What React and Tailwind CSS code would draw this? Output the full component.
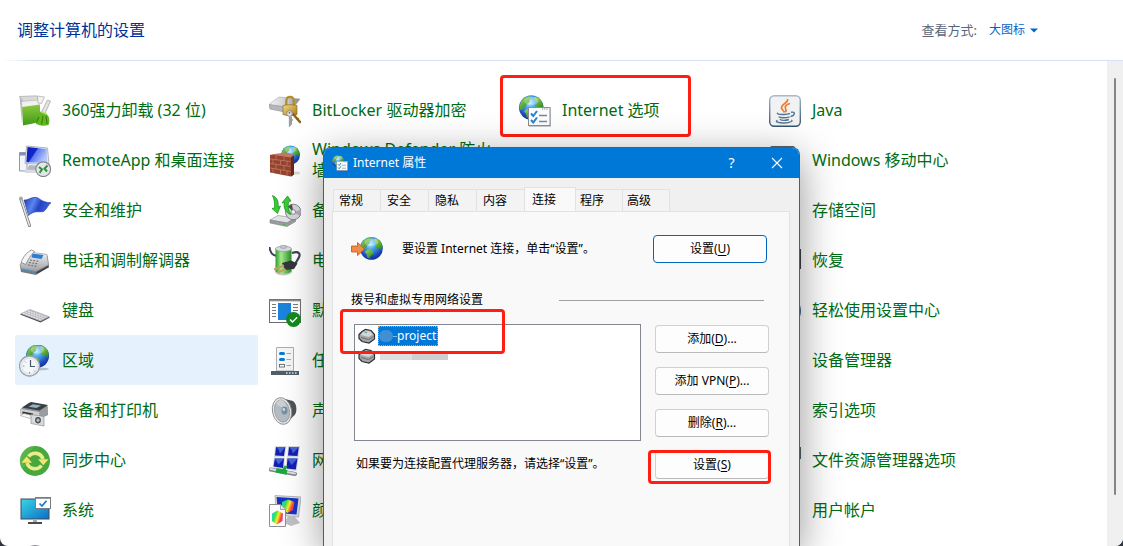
import React from "react";

function Svg({ children, className = "h-8 w-8" }) {
  return (
    <svg viewBox="0 0 32 32" className={`shrink-0 ${className}`} aria-hidden="true">
      {children}
    </svg>
  );
}

/* Gradients shared by all the icons. */
function Defs() {
  return (
    <svg className="absolute h-0 w-0" aria-hidden="true">
      <defs>
        <radialGradient id="sea" cx="0.45" cy="0.3" r="0.75">
          <stop offset="0" stopColor="#b5ecff" />
          <stop offset="0.35" stopColor="#3f9fe8" />
          <stop offset="0.75" stopColor="#1c45b8" />
          <stop offset="1" stopColor="#122a80" />
        </radialGradient>
        <linearGradient id="land" x1="0" y1="0" x2="0.6" y2="1">
          <stop offset="0" stopColor="#a6dc5a" />
          <stop offset="1" stopColor="#2c8a2a" />
        </linearGradient>
        <linearGradient id="screen" x1="0" y1="0" x2="1" y2="0.5">
          <stop offset="0" stopColor="#0a1fb4" />
          <stop offset="0.45" stopColor="#1426cc" />
          <stop offset="0.5" stopColor="#5a7af0" />
          <stop offset="1" stopColor="#b7c8fb" />
        </linearGradient>
        <linearGradient id="metal" x1="0" y1="0" x2="0" y2="1">
          <stop offset="0" stopColor="#f6f6f7" />
          <stop offset="1" stopColor="#9c9ea1" />
        </linearGradient>
        <linearGradient id="metalAcross" x1="0" y1="0" x2="1" y2="0">
          <stop offset="0" stopColor="#f4f4f5" />
          <stop offset="0.6" stopColor="#c9cacd" />
          <stop offset="1" stopColor="#7f8184" />
        </linearGradient>
        <linearGradient id="leaf" x1="0" y1="0" x2="0" y2="1">
          <stop offset="0" stopColor="#9ed24a" />
          <stop offset="1" stopColor="#3d9a16" />
        </linearGradient>
        <linearGradient id="gold" x1="0" y1="0" x2="1" y2="1">
          <stop offset="0" stopColor="#f3db83" />
          <stop offset="1" stopColor="#a67a1b" />
        </linearGradient>
        <linearGradient id="flagBlue" x1="0" y1="0" x2="1" y2="0.3">
          <stop offset="0" stopColor="#1d3bb4" />
          <stop offset="0.4" stopColor="#5b84f0" />
          <stop offset="0.65" stopColor="#2343c4" />
          <stop offset="1" stopColor="#3f62dd" />
        </linearGradient>
        <linearGradient id="aqua" x1="0" y1="0" x2="1" y2="1">
          <stop offset="0" stopColor="#38d6e8" />
          <stop offset="1" stopColor="#0f6cc4" />
        </linearGradient>
        <linearGradient id="battery" x1="0" y1="0" x2="1" y2="0">
          <stop offset="0" stopColor="#2f9a2c" />
          <stop offset="0.35" stopColor="#a5ea90" />
          <stop offset="1" stopColor="#2a8c28" />
        </linearGradient>
        <linearGradient id="javaEdge" x1="0" y1="0" x2="0" y2="1">
          <stop offset="0" stopColor="#a9b9c8" />
          <stop offset="1" stopColor="#35546f" />
        </linearGradient>
        <linearGradient id="rainbow" x1="0" y1="0.2" x2="1" y2="0.6">
          <stop offset="0" stopColor="#12d6e8" />
          <stop offset="0.3" stopColor="#3be04a" />
          <stop offset="0.55" stopColor="#f8ee2e" />
          <stop offset="0.8" stopColor="#fb4a2c" />
          <stop offset="1" stopColor="#e32bd0" />
        </linearGradient>
      </defs>
    </svg>
  );
}

/* A globe of radius 12 round (12, 12), moved and scaled by its caller. */
function Globe({ x = 0, y = 0, scale = 1 }) {
  return (
    <g transform={`translate(${x} ${y}) scale(${scale})`}>
      <circle cx="12" cy="12" r="12" fill="url(#sea)" />
      <path d="M1.5 8C3 4 6 1.5 9.500 0.800L12 2.200 10 4.500 10.500 6.500 7.500 8.500 6.500 11.500 4 12 3 15 1 14C0.300 12 0.500 10 1.500 8Z" fill="url(#land)" />
      <path d="M15 1.500 18.500 2.200C21.500 4 23.300 7 23.800 10.500L22.500 14 20.500 11.500 18 12.500 16 9.500 17.500 7 15.500 5Z" fill="url(#land)" />
      <path d="M7 14 11 13 14.500 15.500 13.500 18.500 11 20 10.500 22.800 7.500 21.500 7 18 5 16Z" fill="url(#land)" />
      <ellipse cx="12" cy="5.500" rx="7" ry="4" fill="#ffffff" opacity="0.3" />
    </g>
  );
}

function UninstallIcon() {
  return (
    <Svg>
      <path d="M0.500 1.500 4 6.500 20 5 17.500 0.800Z" fill="#d8d9da" stroke="#aaabac" strokeWidth="0.700" />
      <path d="M0.500 1.500 3 28.500 4.500 6.500Z" fill="#b9babb" />
      <path d="M3 6.800 21 5.200V27L4 30.500Z" fill="url(#leaf)" />
      <path d="M3 6.800 21 5.200V9.500L3.200 12Z" fill="#f0f1f0" />
      <path d="M18.500 1 25.500 2 22.500 8.500 19 8Z" fill="#f1f1f1" stroke="#a9aaab" strokeWidth="0.700" />
      <path d="M28.500 5 31.500 6.200 26 18.500 22.500 17Z" fill="#e3e4e5" stroke="#9b9c9d" strokeWidth="0.700" />
      <path d="M21.500 16.500 27.500 19C31 22 31 27 29.500 30 24 31.800 19 30.500 15.500 27.500 19 25 19 20 21.500 16.500Z" fill="#63b81f" />
      <path d="M20 22 17.500 27.500M24 21 22.500 29.500M27 21 28 29" stroke="#34800f" strokeWidth="1.100" fill="none" />
      <path d="M22 16.500 27.500 19" stroke="#bce36f" strokeWidth="1.500" />
    </Svg>
  );
}

function RemoteAppIcon() {
  return (
    <Svg>
      <path d="M0.500 7.500H8V26H0.500Z" fill="#f4f5f8" stroke="#8f99ad" />
      <path d="M1 8H8V10.500H1Z" fill="#7e90b8" />
      <path d="M7.500 1 28.500 3 30 19.500 6 18.500Z" fill="#e7e9ef" stroke="#a0a5b0" strokeWidth="0.800" />
      <path d="M8.500 2 27.500 4 28.300 18 7.300 17.200Z" fill="url(#screen)" />
      <path d="M10 20 18 20.500 17 25H8Z" fill="#b4b8c2" />
      <path d="M6 24.500 18 25 16 28H6Z" fill="#d9dbe1" />
      <circle cx="24.200" cy="24.200" r="7.400" fill="#e4e5e7" stroke="#85878b" strokeWidth="1.200" />
      <path d="M20 22 23 24.500 20.500 27.800M28.500 20.500 25.500 23.500 28 26.500" fill="none" stroke="#28953a" strokeWidth="2" />
    </Svg>
  );
}

function FlagIcon() {
  return (
    <Svg>
      <path d="M5 5C9 5.500 11 2.500 16 2.300 20 2 22 7.500 32 7.800 28.500 10 28 14.500 24.500 16.500 19 17.500 16 15 9.500 20.500Z" fill="url(#flagBlue)" stroke="#1b328e" strokeWidth="0.600" />
      <path d="M1.800 4 10.500 30.500" stroke="#747679" strokeWidth="3" strokeLinecap="round" />
      <path d="M1.800 4 10.500 30.500" stroke="#e6e7e9" strokeWidth="1.500" strokeLinecap="round" />
      <circle cx="2" cy="3.500" r="1.900" fill="#a6a8ab" />
    </Svg>
  );
}

function PhoneIcon() {
  return (
    <Svg>
      <path d="M1 21 13 8 28.500 11 30 22 17 30 2 27Z" fill="#77797b" />
      <path d="M1 19.500 11 7 28 9.500 29.500 20 17 26.500 2 23.500Z" fill="url(#metal)" stroke="#85878a" strokeWidth="0.600" />
      <path d="M13.500 8.500 24.500 10 22.500 14 12.500 12.500Z" fill="#2c7fd0" />
      <path d="M2 17.500C4 12 8 7 12.500 5L15.500 6.500C12 10 9 14 7 19.500Z" fill="#f4f4f5" stroke="#8b8d90" strokeWidth="0.900" />
      <path d="M11 15 20.500 16.500M10 17.500 19.500 19M9 20 18.500 21.500" stroke="#6c6e72" strokeWidth="1.100" strokeDasharray="2 1.200" />
      <path d="M3.500 24.700 16 27.200" stroke="#369be4" strokeWidth="1.800" strokeDasharray="2 1.200" />
      <path d="M17.500 28 29.500 21.500" stroke="#3f4143" strokeWidth="1.500" />
    </Svg>
  );
}

function KeyboardIcon() {
  return (
    <Svg>
      <path d="M1 19.500 11 15 31 22.500 21.500 27.500Z" fill="#4b4d52" />
      <path d="M1 18.500 11 14 31 21.500 21.500 26.200Z" fill="#b9bbc0" />
      <path d="M4 18.200 22.500 25M6.500 17 25 23.700M9 15.900 27.500 22.500" stroke="#f0f0f2" strokeWidth="1" strokeDasharray="2 0.800" />
    </Svg>
  );
}

function RegionIcon() {
  return (
    <Svg>
      <Globe x={7} y={-0.5} scale={0.96} />
      <ellipse cx="21" cy="24" rx="9" ry="1.500" fill="#7d8da0" opacity="0.5" />
      <circle cx="10.500" cy="21" r="10" fill="#eef1f4" stroke="#9aa3ad" strokeWidth="1.300" />
      <circle cx="10.500" cy="21" r="7.800" fill="#f4f7f9" stroke="#ccd3da" strokeWidth="0.600" />
      <path d="M11.500 15V21.500H16" stroke="#43566a" strokeWidth="1.200" fill="none" />
      <path d="M4 21H5.500M10.500 27V28.500M6 16.500 7 17.500M15 25.500 16 26.500" stroke="#8494a3" strokeWidth="1" />
    </Svg>
  );
}

function PrinterIcon() {
  return (
    <Svg>
      <path d="M1.500 14 10 7.500 28.500 10.500 29 20 20 24 1.500 19Z" fill="#8d9093" />
      <path d="M3 12.500 12 7 29 10 20.500 15.500Z" fill="#3a3d42" />
      <path d="M9.500 11.800 14 9.300 22 10.500 17.500 13Z" fill="#93b3c4" />
      <path d="M2 14 20.500 17V24L2 19.500Z" fill="#cfd0d2" />
      <path d="M20.500 16.500 28.500 11.500V19.500L20.500 24Z" fill="#9b9da0" />
      <path d="M3.500 16.500 14 18.500V21.500L3.500 19.500Z" fill="#2b2d30" />
      <path d="M1 20.500 5 18.500 13.500 20.500 11 23.500Z" fill="#f6f6f7" stroke="#9ea0a2" strokeWidth="0.600" />
      <path d="M12 19.500 25 21.500V31L12 28.500Z" fill="#d8d9db" stroke="#8e9093" strokeWidth="0.700" />
      <ellipse cx="19" cy="25.200" rx="3.600" ry="4" fill="#505359" stroke="#f2f2f3" strokeWidth="1" />
      <ellipse cx="19" cy="25.200" rx="1.500" ry="1.800" fill="#a9bfca" />
    </Svg>
  );
}

function SyncIcon() {
  return (
    <Svg>
      <circle cx="16" cy="16" r="15" fill="#47a83e" />
      <path d="M6.500 21A11 11 0 0 1 7 11L16 1A15 15 0 0 0 3 24Z" fill="#6cc158" opacity="0.5" />
      <path d="M9.500 11.500A8.300 8.300 0 0 1 24 14" fill="none" stroke="#ecea8c" strokeWidth="3.600" />
      <path d="M19 14.200H29.500L24.300 20.200Z" fill="#f8e36c" />
      <path d="M22.500 20.500A8.300 8.300 0 0 1 8 18" fill="none" stroke="#ecea8c" strokeWidth="3.600" />
      <path d="M2.500 17.800H13L7.700 11.200Z" fill="#f8e36c" />
    </Svg>
  );
}

function SystemIcon() {
  return (
    <Svg>
      <rect x="2" y="4" width="28" height="20" fill="url(#aqua)" stroke="#3c4d5a" />
      <path d="M14 24H18V27H14Z" fill="#a6abb0" />
      <path d="M9 27H23V29H9Z" fill="#474c52" />
      <rect x="16.500" y="2.500" width="15" height="11" fill="#ffffff" stroke="#777d84" />
      <path d="M16.500 3H31.500" stroke="#777d84" strokeWidth="1.500" />
      <path d="M20.500 8.500 23 11 27.500 5.800" fill="none" stroke="#1978d2" strokeWidth="1.700" />
    </Svg>
  );
}

function DialIcon() {
  return (
    <Svg>
      <circle cx="16" cy="16" r="15.500" fill="#d0d0d0" stroke="#85878a" />
    </Svg>
  );
}

function BitLockerIcon() {
  return (
    <Svg>
      <path d="M0.500 9 10 2 31 4 25 12 1 13Z" fill="url(#metalAcross)" stroke="#a4a5a8" strokeWidth="0.600" />
      <path d="M0.500 9.500 16 12 16 17 1 14Z" fill="#b7b8bb" stroke="#8b8c90" strokeWidth="0.600" />
      <path d="M17.300 10.500V6C17.500 0.500 24.500 0.500 24.800 6V10.500" fill="none" stroke="#b58d2e" strokeWidth="2.300" />
      <path d="M14 10.500C18 9.500 24 9.500 28 10.500V19.500C24 21 18 21 14 19.500Z" fill="url(#gold)" stroke="#8f6c1d" strokeWidth="0.700" />
      <path d="M24 19 31 27" stroke="#8c6315" strokeWidth="2.500" strokeLinecap="round" />
      <path d="M28 25 29.500 23" stroke="#8c6315" strokeWidth="1.500" />
      <circle cx="20.500" cy="18.500" r="2.800" fill="#e8e8e9" stroke="#85878a" strokeWidth="1" />
      <path d="M20.700 21.500V30.500L22.200 29V21.500M22.500 25H24" stroke="#9b9da0" strokeWidth="1.700" fill="none" />
      <circle cx="20.500" cy="17.800" r="0.900" fill="#5b5d60" />
    </Svg>
  );
}

function FirewallIcon() {
  return (
    <Svg>
      <Globe x={12} y={0.5} scale={0.79} />
      <ellipse cx="27" cy="28" rx="4" ry="1.500" fill="#9a9a9a" opacity="0.4" />
      <path d="M1 10 19 8.500 25 10.500V29.500L22 31.500 1 27.500Z" fill="#97432f" />
      <path d="M1 9.500 17 7.500 25 10 21.500 12.500Z" fill="#c27a63" />
      <path d="M1.200 14 21.800 16.500M1.200 18.500 21.800 21.500M1.200 23 21.800 26.500M7 10.500V14.500M15 11.500V15.500M4 14.500V18.800M11.500 15.500V19.800M18 16V20.500M7 19.500V24M15 20.500V25.300M4 23.500V28M11.500 25V29.500M18 26V31" stroke="#c88e7b" strokeWidth="0.600" />
      <path d="M22 12.500 25 10.500V29.500L22 31.500Z" fill="#6c2819" />
    </Svg>
  );
}

function BackupIcon() {
  return (
    <Svg>
      <path d="M1 25 9 20.500 26.500 23 18 28Z" fill="#e3e4e5" stroke="#8f9194" strokeWidth="0.600" />
      <path d="M1 25 18 28 26.500 23V26.500L18 31.500 1 28Z" fill="#9c9ea1" stroke="#6f7174" strokeWidth="0.500" />
      <circle cx="24.300" cy="17" r="7.800" fill="#d5d6d9" stroke="#6f7174" strokeWidth="0.800" />
      <path d="M24.300 17 19 11.500 23 9.300Z" fill="#4d4f53" />
      <path d="M24.300 17 31.500 15 31 21Z" fill="#b9a2c4" />
      <circle cx="24.300" cy="17" r="2.300" fill="#f7f7f8" stroke="#77797c" strokeWidth="0.800" />
      <path d="M3.500 0.500C8 2 10 7 9 12L11.500 11 8.500 18.500 3 13.500 5.500 13C6 8 5 4 3.500 0.500Z" fill="#33cf2f" stroke="#178a18" strokeWidth="0.700" />
      <path d="M13 8 18.500 1 22 6 19.800 6.500C18.500 11 19.500 16 22 19.500 16.500 18 14 12 15.500 7.500Z" fill="#33cf2f" stroke="#178a18" strokeWidth="0.700" />
      <path d="M14 29.500 16 30" stroke="#2bd02c" strokeWidth="1.500" />
    </Svg>
  );
}

function PowerIcon() {
  return (
    <Svg>
      <path d="M0.500 2C1 8 4 10.500 8 11" fill="none" stroke="#3b4257" strokeWidth="2" />
      <path d="M6.500 3.500H22.500V27C20 31 9 31 6.500 27Z" fill="url(#battery)" />
      <ellipse cx="14.500" cy="3.800" rx="8" ry="2.600" fill="#d9dde0" stroke="#8f969b" strokeWidth="0.700" />
      <ellipse cx="14.500" cy="1.800" rx="3.500" ry="1.700" fill="#c3c7cb" stroke="#888e93" strokeWidth="0.500" />
      <path d="M23 8C30 5.500 32.500 9 29 14L26 19" fill="none" stroke="#3b4257" strokeWidth="2.200" />
      <path d="M13 18 22 15.500 28.500 18.500 25 24 16 25Z" fill="#34363b" />
      <path d="M15 20.500 5 24.500M16.500 24 8 28" stroke="#c3a05f" strokeWidth="2.200" />
      <path d="M6.500 27.500C10 30.500 19 30.500 22.500 27" fill="none" stroke="#c7cbce" strokeWidth="1.500" />
    </Svg>
  );
}

function DefaultAppsIcon() {
  return (
    <Svg>
      <rect x="0.500" y="4.500" width="31" height="23" fill="#ffffff" stroke="#6c6e71" />
      <path d="M0.500 5.500H31.500" stroke="#8a8c90" strokeWidth="1.600" />
      <path d="M3 9.500H7M3 12.500H7M3 15.500H7M3 18.500H7M3 21.500H7M24 9.500H29M24 12.500H29M24 15.500H29" stroke="#77797c" />
      <path d="M9 8H22V25H9Z" fill="#1b84dc" />
      <circle cx="24.500" cy="24.500" r="7.500" fill="#128a1d" />
      <path d="M21 24.500 23.500 27 28.200 22.200" fill="none" stroke="#ffffff" strokeWidth="1.400" />
    </Svg>
  );
}

function TaskbarIcon() {
  return (
    <Svg>
      <path d="M7.500 2.500H24.500V26H7.500Z" fill="#f5f6f7" stroke="#aaacaf" />
      <rect x="10" y="7" width="6" height="3" rx="1.500" fill="#0b78cf" />
      <rect x="10" y="13" width="6" height="3" rx="1.500" fill="#0b78cf" />
      <rect x="10.500" y="19.500" width="5" height="2.500" fill="#ffffff" stroke="#66686b" strokeWidth="0.900" />
      <path d="M17.500 8.500H22M17.500 14.500H22M17.500 20.500H22" stroke="#a6a8ab" />
      <path d="M2 26H30V30H2Z" fill="#505e69" />
      <path d="M17 28H27.500" stroke="#e3e8eb" strokeWidth="1.500" strokeDasharray="1.500 1.500" />
    </Svg>
  );
}

function SoundIcon() {
  return (
    <Svg>
      <path d="M14 3.500 24 6C28.500 9 28.500 19 24.500 21L17 29Z" fill="#505357" />
      <ellipse cx="13" cy="16" rx="9.500" ry="13.500" transform="rotate(-12 13 16)" fill="#ededee" stroke="#8b8d90" strokeWidth="0.900" />
      <ellipse cx="13" cy="16" rx="7.500" ry="11.300" transform="rotate(-12 13 16)" fill="#b3bcc3" stroke="#85898d" strokeWidth="0.600" />
      <path d="M7 9C11 12 15 13 18 12L15 6C12 3.500 9 5 7 9Z" fill="#d0d6da" opacity="0.8" />
      <ellipse cx="15.500" cy="15.500" rx="3" ry="4" fill="#7590a2" />
      <ellipse cx="14.800" cy="14.500" rx="1.300" ry="1.800" fill="#c9dbe5" />
    </Svg>
  );
}

function NetworkIcon() {
  return (
    <Svg>
      <path d="M6 1H17.500L16 12H5ZM19 1H31L29.500 12H18ZM5 12.500H16L15 24.500 3.500 22.500ZM17.500 12.500H29.500L27.500 26 16.500 24.500Z" fill="#d7dae1" />
      <path d="M7 2H16.300L15 11 6 10.500ZM20 2H29.800L28.500 11 19 10.500ZM5.800 13.500H15L14 23 4.500 21.500ZM18.500 13.500H28.500L26.800 24.500 17.500 23.500Z" fill="#1220b2" />
      <path d="M7 2H16.300L11 8.500 9.500 4.500ZM20 2H29.800L24 8.500 22.500 4.500ZM5.800 13.500H15L9.500 19.500ZM18.500 13.500H28.500L22.500 20Z" fill="#5a78e4" opacity="0.75" />
      <path d="M1.500 24.500 26 29" stroke="#7f8487" strokeWidth="4" strokeLinecap="round" />
      <path d="M1.500 24 26 28.500" stroke="#dadddf" strokeWidth="2" strokeLinecap="round" />
      <path d="M7 25.300 18 27.500" stroke="#20a840" strokeWidth="4.500" />
      <path d="M14 26.500 17 21" stroke="#20a840" strokeWidth="3" />
    </Svg>
  );
}

function ColorIcon() {
  return (
    <Svg>
      <path d="M6 0.500 32 2 29.500 22 7.500 20Z" fill="#dcdde1" stroke="#9a9ca1" strokeWidth="0.700" />
      <path d="M7.500 2 29.500 3.500 27.500 19.500 9 18Z" fill="#1634c4" />
      <path d="M19 21 26 22 31 28 22 31 15 28Z" fill="#bfc1c5" />
      <path d="M13 7 19 4.500 25.500 7 24 15 18.500 18 13 14.500Z" fill="url(#rainbow)" />
      <path d="M0.500 9.500H11.500L16.500 14.500V31.500H0.500Z" fill="#fbfbfb" stroke="#8e9093" />
      <path d="M11.500 9.500V14.500H16.500" fill="#e3e4e6" stroke="#8e9093" strokeWidth="0.800" />
      <path d="M3 18.500 8.500 15.500 14 18.500 13.500 26 8 29.500 3 26Z" fill="url(#rainbow)" />
    </Svg>
  );
}

function InternetIcon({ className }) {
  return (
    <Svg className={className}>
      <Globe x={0} y={0.3} scale={1.02} />
      <path d="M10 13H32V32H10Z" fill="#7c7e82" opacity="0.4" />
      <rect x="9.500" y="12.500" width="21.500" height="18" fill="#fbfcfd" stroke="#8b8d91" />
      <path d="M23 14H29.500" stroke="#77797d" strokeWidth="1" strokeDasharray="1.200 1" />
      <path d="M12 18.500 14.300 21 18 16M12 25 14.300 27.500 18 22.500" fill="none" stroke="#2384cf" strokeWidth="2" />
      <path d="M20 20.500H28M20 26.500H28" stroke="#82868c" strokeWidth="1.300" />
    </Svg>
  );
}

function JavaIcon() {
  return (
    <Svg>
      <rect x="0.700" y="0.700" width="30.600" height="30.600" rx="4.500" fill="#f1f2f3" stroke="url(#javaEdge)" strokeWidth="1.400" />
      <path d="M18.500 4C20 7.500 12 9 12.500 13 12.800 15 15 15.500 15.300 17.500M21 8.500C17 9.500 15.500 11.500 16.500 13.300 17.300 14.800 17.500 15.800 16.300 17.300" fill="none" stroke="#ee7a2b" strokeWidth="1.700" />
      <path d="M9 18C7 18.800 10 19.800 15 19.500 18 19.300 20 18.800 21 18.300M22 17.300C27 16 26 21 21.500 21.500M10 21.500C10 23 17 23.200 20.500 21.800M11 24.300C11.500 25.600 17 25.700 19.800 24.500M8.500 25.500C3.500 27.300 17 29.300 22.500 26.500 23.300 26 23 25.500 22.300 25.200" fill="none" stroke="#557590" strokeWidth="1.400" />
    </Svg>
  );
}

function DeviceIcon() {
  return (
    <Svg>
      <rect x="1" y="1" width="25" height="22" rx="2" fill="#5a6168" />
      <rect x="3" y="3" width="21" height="18" fill="#2d81c9" />
      <rect x="8" y="25" width="12" height="2" fill="#5a6168" />
    </Svg>
  );
}

function DriveIcon() {
  return (
    <Svg>
      <rect x="1" y="9" width="30" height="14" rx="2" fill="url(#metal)" />
    </Svg>
  );
}

function RecoveryIcon() {
  return (
    <Svg>
      <rect x="1" y="4" width="31" height="20" fill="#3b4146" />
      <rect x="3" y="6" width="26" height="16" fill="#2d81c9" />
    </Svg>
  );
}

function FolderOptionsIcon() {
  return (
    <Svg>
      <path d="M1 6H12L14 9H28V29H1Z" fill="#f5c84f" />
      <rect x="14" y="2" width="18" height="12" fill="#56616b" />
      <rect x="15" y="4" width="15" height="9" fill="#ffffff" />
    </Svg>
  );
}

function AccessIcon() {
  return (
    <Svg>
      <circle cx="16" cy="16" r="16" fill="#3d668f" />
      <path d="M8 16H24M16 8V24" stroke="#ffffff" strokeWidth="3" />
    </Svg>
  );
}

function DialUpIcon({ className }) {
  return (
    <Svg className={className}>
      <Globe x={9} y={4} scale={0.95} />
      <path d="M0.500 13H6.500V9.500L13.500 16 6.500 22.500V19H0.500Z" fill="#f28a48" stroke="#c2541a" strokeWidth="0.800" />
    </Svg>
  );
}

function ModemIcon() {
  return (
    <svg viewBox="0 0 18 16" className="h-4 w-[18px] shrink-0" aria-hidden="true">
      <path d="M1 6.500 4 3.500 7.500 1.500 13 2.500 16.500 6.500V11L11 15 4 13.500 1 10.500Z" fill="#a3a5a6" stroke="#2f3132" strokeWidth="1.200" />
      <path d="M4.500 4.500 7.500 2.500 12.500 3.500 15 6.500 10.500 9 3 7Z" fill="#d3d5d6" />
      <path d="M3 9.500 10.500 11.500 15.500 8.500" stroke="#6c6e70" strokeWidth="1" fill="none" />
      <path d="M6.500 4 9 4.500" stroke="#2fa39c" strokeWidth="1.200" />
    </svg>
  );
}

const columns = [
  [
    ["360强力卸载 (32 位)", UninstallIcon],
    ["RemoteApp 和桌面连接", RemoteAppIcon],
    ["安全和维护", FlagIcon],
    ["电话和调制解调器", PhoneIcon],
    ["键盘", KeyboardIcon],
    ["区域", RegionIcon, true],
    ["设备和打印机", PrinterIcon],
    ["同步中心", SyncIcon],
    ["系统", SystemIcon],
    ["", DialIcon],
  ],
  [
    ["BitLocker 驱动器加密", BitLockerIcon],
    ["Windows Defender 防火墙", FirewallIcon],
    ["备份和还原", BackupIcon],
    ["电源选项", PowerIcon],
    ["默认程序", DefaultAppsIcon],
    ["任务栏和导航", TaskbarIcon],
    ["声音", SoundIcon],
    ["网络和共享中心", NetworkIcon],
    ["颜色管理", ColorIcon],
  ],
  [["Internet 选项", InternetIcon, false, true]],
  [
    ["Java", JavaIcon],
    ["Windows 移动中心", DeviceIcon],
    ["存储空间", DriveIcon],
    ["恢复", RecoveryIcon],
    ["轻松使用设置中心", AccessIcon],
    ["设备管理器", DriveIcon],
    ["索引选项", DriveIcon],
    ["文件资源管理器选项", FolderOptionsIcon],
    ["用户帐户", DriveIcon],
  ],
];

function Highlight({ className }) {
  return <span className={`pointer-events-none absolute rounded-[4px] border-3 border-[#ff1f12] ${className}`} />;
}

function PanelItem({ label, icon: Icon, active, marked }) {
  return (
    <li className="relative">
      <a
        href="#"
        aria-label={label || "更多"}
        className={`flex h-[50px] items-center gap-[11px] rounded-[2px] pr-4 pl-1 text-[16px] leading-[21px] text-[#006c12] ${active ? "bg-[#e5f2fe]" : ""}`}
      >
        <span className="mt-0.5 shrink-0">
          <Icon />
        </span>
        <span>{label}</span>
      </a>
      {marked && <Highlight className="-top-[10px] -left-[15px] h-[62px] w-[191px]" />}
    </li>
  );
}

function DialogButton({ label, letter, suffix = "", primary }) {
  return (
    <button
      type="button"
      className={`h-7 w-[114px] shrink-0 rounded-[4px] border bg-[#fdfdfd] pb-px text-[12px] leading-4 ${primary ? "border-[#0067c0]" : "border-[#d0d0d0] border-b-[#bababa]"}`}
    >
      {label}(<span className="underline underline-offset-2">{letter}</span>){suffix}
    </button>
  );
}

const tabs = ["常规", "安全", "隐私", "内容", "连接", "程序", "高级"];
const activeTab = tabs.indexOf("连接");

function Tab({ label, index }) {
  const shape =
    index === activeTab
      ? "-mb-px -ml-px h-[25px] w-[52px] border-l bg-[#f9f9f9] pl-[7px]"
      : index > activeTab
        ? "h-[22px] w-[47px] bg-[#f3f3f3] pl-1"
        : "h-[22px] w-12 bg-[#f3f3f3] pl-[6px] first:border-l first:pl-[5px]";
  return (
    <button
      type="button"
      role="tab"
      aria-selected={index === activeTab}
      className={`shrink-0 border-t border-r border-[#e2e2e2] text-left ${shape}`}
    >
      {label}
    </button>
  );
}

function InternetDialog() {
  return (
    <section
      role="dialog"
      aria-label="Internet 属性"
      className="absolute top-[147px] bottom-0 left-[323px] flex w-[477px] flex-col rounded-t-[8px] border border-b-0 border-[#0072cc] bg-[#f0f0f0] text-[12px] leading-4 text-black shadow-[0_10px_40px_rgba(0,0,0,0.42)]"
    >
      <header className="flex h-[30px] shrink-0 items-center rounded-t-[7px] bg-[#0078d7] pl-2 text-white">
        <InternetIcon className="h-4 w-4" />
        <h2 className="flex-1 pl-[5px]">Internet 属性</h2>
        <button type="button" aria-label="帮助" className="h-full w-[45px] text-[14px]">?</button>
        <button type="button" aria-label="关闭" className="flex h-full w-[45px] items-center justify-center">
          <svg viewBox="0 0 12 12" className="h-3 w-3" aria-hidden="true">
            <path d="M1 1 11 11M11 1 1 11" stroke="#ffffff" strokeWidth="1.100" />
          </svg>
        </button>
      </header>

      <div role="tablist" className="flex shrink-0 items-end px-[9px] pt-[9px]">
        {tabs.map((t, i) => (
          <Tab key={t} label={t} index={i} />
        ))}
      </div>

      <div className="mr-[9px] ml-2 flex flex-1 flex-col border border-b-0 border-[#e2e2e2] bg-[#f9f9f9] pl-[18px]">
        <div className="mt-[21px] mr-[22px] flex items-center">
          <DialUpIcon className="h-8 w-8" />
          <p className="flex-1 pl-[19px]">要设置 Internet 连接，单击“设置”。</p>
          <DialogButton label="设置" letter="U" primary />
        </div>

        <div className="mt-[27px] mr-[25px] flex items-center justify-between">
          <h3>拨号和虚拟专用网络设置</h3>
          <span className="h-px w-[205px] bg-[#a0a0a0]" />
        </div>

        <div className="mt-4 mr-5 flex justify-between pl-[3px]">
          <div className="w-[287px]">
            <div className="relative">
              <ul className="h-[117px] border border-[#828790] bg-white pt-px pl-[3px]">
                <li className="flex h-5 items-center gap-[2px]">
                  <ModemIcon />
                  <span className="flex h-5 items-center border border-dotted border-[#ff9a3c] bg-[#0078d7] pr-px text-white">
                    <span className="h-3 w-[14px] rounded-[6px] bg-[#3f8fd6]" />
                    <span className="h-px w-1 bg-[#7fb5e4]" />
                    project
                  </span>
                </li>
                <li className="flex h-5 items-center gap-1">
                  <ModemIcon />
                  <span className="flex h-[7px]">
                    <span className="w-8 bg-[#dedede]" />
                    <span className="w-9 bg-[#cfcfcf]" />
                  </span>
                </li>
              </ul>
              <Highlight className="-top-[15px] -left-[14px] h-[45px] w-[165px]" />
            </div>
            <p className="mt-[15px] pl-[2px] whitespace-nowrap">如果要为连接配置代理服务器，请选择“设置”。</p>
          </div>
          <div className="flex flex-col gap-[14px] pt-px">
            <DialogButton label="添加" letter="D" suffix="..." />
            <DialogButton label="添加 VPN" letter="P" suffix="..." />
            <DialogButton label="删除" letter="R" suffix="..." />
            <div className="relative h-7">
              <DialogButton label="设置" letter="S" />
              <Highlight className="-top-px -left-[7px] h-[34px] w-[123px]" />
            </div>
          </div>
        </div>
      </div>
    </section>
  );
}

export default function App() {
  return (
    <div className="h-screen overflow-hidden bg-[#30343c] font-['Noto_Sans','Noto_Sans_CJK_SC',sans-serif]">
      <Defs />
      <main className="relative flex h-full flex-col overflow-hidden rounded-b-[8px] bg-white">
        <header className="flex h-[60px] shrink-0 items-center pr-[85px] pl-[17px]">
          <h1 className="flex-1 text-[16px] leading-5 text-[#003399]">调整计算机的设置</h1>
          <label htmlFor="view" className="pr-3 text-[13px] leading-4 text-[#5a6678]">
            查看方式:
          </label>
          <span className="flex items-center gap-1 text-[#0066cc]">
            <select id="view" className="appearance-none bg-transparent text-[12px] leading-4">
              <option>大图标</option>
            </select>
            <svg viewBox="0 0 8 5" className="h-[5px] w-2" aria-hidden="true">
              <path d="M0 0.500H8L4 4.500Z" fill="#0066cc" />
            </svg>
          </span>
        </header>
        <div className="h-px shrink-0 bg-linear-to-r from-white via-[#d3e3f3] via-3% to-[#d3e3f3]" />

        <div className="flex min-h-0 flex-1">
          <nav className="flex flex-1 gap-[7px] overflow-hidden pt-6 pl-[15px]">
            {columns.map((column, i) => (
              <ul key={i} className="w-[243px] shrink-0">
                {column.map(([label, icon, active, marked]) => (
                  <PanelItem key={label} label={label} icon={icon} active={active} marked={marked} />
                ))}
              </ul>
            ))}
          </nav>
          <div className="flex w-4 shrink-0 justify-center bg-[#f0f0f0] pt-[17px] pb-[51px]">
            <span className="h-full w-[2px] rounded-[1px] bg-[#858585]" />
          </div>
        </div>

        <InternetDialog />
      </main>
    </div>
  );
}
